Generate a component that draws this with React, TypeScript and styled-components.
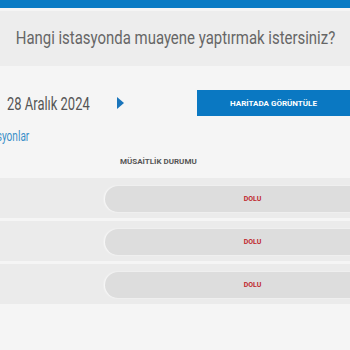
import React from "react";
import styled, { createGlobalStyle } from "styled-components";

const GlobalStyle = createGlobalStyle`
  html, body {
    margin: 0;
    padding: 0;
    background: #f5f5f5;
    font-family: Roboto, "Liberation Sans", sans-serif;
    overflow: hidden;
  }
`;

const TopBar = styled.div`
  height: 8px;
  background: #0a7bc4;
  margin-bottom: 3px;
`;

const Header = styled.div`
  height: 55px;
  background: #ededed;
  display: flex;
  align-items: center;
  justify-content: center;
`;

// condensed look: the source uses a narrow DIN-like face
const Title = styled.h1`
  margin: 0 0 2px;
  font-weight: 400;
  font-size: 18px;
  color: #666;
  white-space: nowrap;
  transform: scaleX(0.83);
  transform-origin: center;
`;

const DateRow = styled.div`
  display: flex;
  align-items: center;
  margin-top: 24px;
  height: 26px;
`;

const DateBox = styled.div`
  width: 117px;
  flex: none;
  padding-left: 7px;
  box-sizing: border-box;
`;

const DateText = styled.span`
  display: inline-block;
  font-size: 18px;
  color: #555;
  white-space: nowrap;
  transform: scaleX(0.72);
  transform-origin: left center;
`;

const Arrow = styled.svg`
  width: 7px;
  height: 12px;
  flex: none;
`;

const MapButton = styled.button`
  margin-left: auto;
  margin-right: -10px;
  width: 163px;
  height: 26px;
  border: none;
  background: #0a78c2;
  color: #fff;
  font-family: inherit;
  font-weight: 700;
  font-size: 8px;
  padding: 0 10px 0 0;
`;

const StationsLink = styled.a`
  display: block;
  margin: 12px 0 0 -20px;
  font-size: 14px;
  color: #3a8fc8;
  white-space: nowrap;
  transform: scaleX(0.72);
  transform-origin: left center;
`;

const ColumnHead = styled.div`
  margin: 13px 0 0 120px;
  font-size: 8px;
  font-weight: 700;
  color: #555;
`;

const Table = styled.div`
  margin-top: 12px;
  display: flex;
  flex-direction: column;
  gap: 3px;
`;

const Row = styled.div`
  height: 40px;
  background: #ebebeb;
  padding-top: 8px;
  box-sizing: border-box;
  overflow: hidden;
`;

const StatusPill = styled.div<{ $full?: boolean }>`
  margin-left: 105px;
  width: 295px;
  height: 26px;
  border-radius: 13px;
  background: #dddddd;
  box-shadow: -1px 0 2px rgba(255, 255, 255, 0.8);
  display: flex;
  align-items: center;
  justify-content: center;
  font-size: 7px;
  font-weight: 700;
  color: ${(p) => (p.$full ? "#c0282d" : "#3a8f3a")};
`;

const rows = ["DOLU", "DOLU", "DOLU"];

const App = () => {
  return (
    <>
      <GlobalStyle />
      <TopBar />
      <Header>
        <Title>Hangi istasyonda muayene yaptırmak istersiniz?</Title>
      </Header>
      <DateRow>
        <DateBox>
          <DateText>28 Aralık 2024</DateText>
        </DateBox>
        <Arrow viewBox="0 0 7 12">
          <path d="M0 0 L7 6 L0 12 Z" fill="#1a75bb" />
        </Arrow>
        <MapButton>HARİTADA GÖRÜNTÜLE</MapButton>
      </DateRow>
      <StationsLink>İstasyonlar</StationsLink>
      <ColumnHead>MÜSAİTLİK DURUMU</ColumnHead>
      <Table>
        {rows.map((status, index) => (
          <Row key={index}>
            <StatusPill $full={status === "DOLU"}>{status}</StatusPill>
          </Row>
        ))}
      </Table>
    </>
  );
};

export default App;
